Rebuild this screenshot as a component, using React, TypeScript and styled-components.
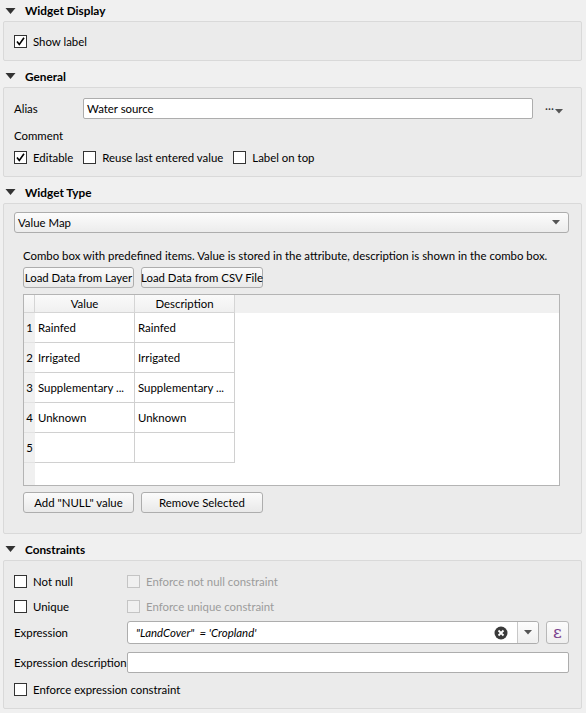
import React from 'react';
import styled, { createGlobalStyle } from 'styled-components';

const GlobalStyle = createGlobalStyle`
  html, body {
    margin: 0;
    padding: 0;
    background: #f0f0f0;
  }
  body {
    font-family: Lato, "Noto Sans", sans-serif;
    font-size: 11.4px;
    color: #000;
  }
`;

const Page = styled.div`
  width: 586px;
  height: 713px;
  overflow: hidden;
  padding: 0 4px 0 3px;
  box-sizing: border-box;
`;

const Section = styled.section<{ $first?: boolean }>`
  margin-top: ${(p) => (p.$first ? '0' : '4px')};
`;

const SectionHeader = styled.div<{ $first?: boolean }>`
  height: ${(p) => (p.$first ? '21px' : '22px')};
  display: flex;
  align-items: center;
  gap: 9px;
  padding-left: 2px;
  font-weight: bold;
  font-size: 11.8px;
`;

const Box = styled.div<{ $h: number }>`
  height: ${(p) => p.$h}px;
  box-sizing: border-box;
  background: #ebebeb;
  border: 1px solid #d9d9d9;
  border-radius: 2px;
  padding: 0 12px 0 10px;
  display: flex;
  flex-direction: column;
`;

const Row = styled.div<{ $h?: number; $mt?: number; $gap?: number }>`
  display: flex;
  align-items: center;
  height: ${(p) => p.$h ?? 16}px;
  margin-top: ${(p) => p.$mt ?? 0}px;
  gap: ${(p) => p.$gap ?? 0}px;
  white-space: nowrap;
`;

const CheckWrap = styled.label<{ $disabled?: boolean; $w?: number }>`
  display: flex;
  align-items: center;
  gap: 6px;
  color: ${(p) => (p.$disabled ? '#9c9c9c' : '#000')};
  width: ${(p) => (p.$w ? `${p.$w}px` : 'auto')};
  white-space: nowrap;
`;

const CheckBoxSquare = styled.span<{ $disabled?: boolean }>`
  width: 13px;
  height: 13px;
  box-sizing: border-box;
  border: 1px solid ${(p) => (p.$disabled ? '#c4c4c4' : '#333')};
  background: ${(p) => (p.$disabled ? '#f0f0f0' : '#fff')};
  display: flex;
  align-items: center;
  justify-content: center;
  flex: none;
`;

const Triangle = () => (
  <svg width="11" height="8" viewBox="0 0 11 8">
    <path d="M0.5 1 L10.5 1 L5.5 7 Z" fill="#333" />
  </svg>
);

const Check = ({
  label,
  checked,
  disabled,
  width,
}: {
  label: string;
  checked?: boolean;
  disabled?: boolean;
  width?: number;
}) => (
  <CheckWrap $disabled={disabled} $w={width}>
    <CheckBoxSquare $disabled={disabled}>
      {checked && (
        <svg width="11" height="11" viewBox="0 0 11 11">
          <path d="M2 5.5 L4.3 8.5 L9 1.8" stroke="#000" strokeWidth="1.6" fill="none" />
        </svg>
      )}
    </CheckBoxSquare>
    {label}
  </CheckWrap>
);

const FieldLabel = styled.span<{ $w: number }>`
  width: ${(p) => p.$w}px;
  flex: none;
  white-space: nowrap;
`;

const TextInput = styled.div`
  flex: 1;
  height: 21px;
  box-sizing: border-box;
  background: #fff;
  border: 1px solid #adadad;
  border-radius: 2px;
  display: flex;
  align-items: center;
  padding-left: 3px;
`;

const ToolButton = styled.div`
  width: 36px;
  flex: none;
  display: flex;
  align-items: center;
  justify-content: flex-end;
  padding-right: 6px;
  box-sizing: border-box;
  height: 21px;
`;

const Combo = styled.div`
  height: 21px;
  box-sizing: border-box;
  border: 1px solid #adadad;
  border-radius: 3px;
  background: linear-gradient(#fcfcfc, #ececec);
  display: flex;
  align-items: center;
  justify-content: space-between;
  padding: 0 8px 0 3px;
  margin-top: 8px;
`;

const SmallArrow = () => (
  <svg width="8" height="5" viewBox="0 0 8 5">
    <path d="M0 0 L8 0 L4 4.5 Z" fill="#555" />
  </svg>
);

const Inner = styled.div`
  padding: 0 9px;
  display: flex;
  flex-direction: column;
`;

const Button = styled.div<{ $w: number }>`
  width: ${(p) => p.$w}px;
  height: 21px;
  box-sizing: border-box;
  border: 1px solid #adadad;
  border-radius: 3px;
  background: linear-gradient(#fbfbfb, #e9e9e9);
  display: flex;
  align-items: center;
  justify-content: center;
  white-space: nowrap;
`;

const TableFrame = styled.div`
  height: 192px;
  box-sizing: border-box;
  border: 1px solid #b4b4b4;
  background: #fff;
  display: flex;
  flex-direction: column;
  margin-top: 6px;
`;

const HeaderRow = styled.div`
  display: flex;
  height: 18px;
  background: #f0f0f0;
  flex: none;
`;

const HeadCell = styled.div<{ $w: number }>`
  width: ${(p) => p.$w}px;
  box-sizing: border-box;
  background: linear-gradient(#fafafa, #f0f0f0);
  border-right: 1px solid #d5d5d5;
  border-bottom: 1px solid #d5d5d5;
  display: flex;
  align-items: center;
  justify-content: center;
`;

const TableBody = styled.div`
  flex: 1;
  display: flex;
`;

const RowNumbers = styled.div`
  width: 11px;
  background: #f0f0f0;
  display: flex;
  flex-direction: column;
`;

const RowNum = styled.div`
  height: 30px;
  box-sizing: border-box;
  border-bottom: 1px solid #e2e2e2;
  display: flex;
  align-items: center;
  justify-content: center;
`;

const Grid = styled.div`
  display: grid;
  grid-template-columns: 100px 100px;
  grid-auto-rows: 30px;
  align-self: flex-start;
`;

const Cell = styled.div`
  box-sizing: border-box;
  border-right: 1px solid #d0d0d0;
  border-bottom: 1px solid #d0d0d0;
  padding-left: 3px;
  display: flex;
  align-items: center;
  white-space: nowrap;
  overflow: hidden;
`;

const ExprInput = styled.div`
  flex: 1;
  height: 23px;
  box-sizing: border-box;
  background: #fff;
  border: 1px solid #adadad;
  border-radius: 3px;
  display: flex;
  align-items: center;
`;

const ExprText = styled.span`
  flex: 1;
  padding-left: 8px;
  font-style: italic;
  white-space: pre;
`;

const ExprDrop = styled.div`
  width: 20px;
  height: 100%;
  border-left: 1px solid #c8c8c8;
  display: flex;
  align-items: center;
  justify-content: center;
  background: linear-gradient(#fdfdfd, #efefef);
  border-radius: 0 3px 3px 0;
`;

const EpsilonButton = styled.div`
  width: 23px;
  height: 23px;
  margin-left: 7px;
  box-sizing: border-box;
  border: 1px solid #b8b8b8;
  border-radius: 3px;
  background: linear-gradient(#fcfcfc, #efefef);
  display: flex;
  align-items: center;
  justify-content: center;
  color: #7a3f8c;
  font-family: "DejaVu Serif", serif;
  font-size: 17px;
  line-height: 1;
`;

const ClearIcon = () => (
  <svg width="14" height="14" viewBox="0 0 14 14" style={{ marginRight: 9 }}>
    <circle cx="7" cy="7" r="6.5" fill="#3a3a3a" />
    <path d="M4.5 4.5 L9.5 9.5 M9.5 4.5 L4.5 9.5" stroke="#fff" strokeWidth="1.8" />
  </svg>
);

const Dots = styled.span`
  display: flex;
  align-items: flex-end;
  gap: 1px;
  color: #333;
  line-height: 1;
`;

const rows = [
  ['Rainfed', 'Rainfed'],
  ['Irrigated', 'Irrigated'],
  ['Supplementary ...', 'Supplementary ...'],
  ['Unknown', 'Unknown'],
  ['', ''],
];

export default function App() {
  return (
    <Page>
      <GlobalStyle />
      <Section $first>
        <SectionHeader $first>
          <Triangle />
          Widget Display
        </SectionHeader>
        <Box $h={40}>
          <Row $h={16} $mt={11}>
            <Check label="Show label" checked />
          </Row>
        </Box>
      </Section>

      <Section>
        <SectionHeader>
          <Triangle />
          General
        </SectionHeader>
        <Box $h={90}>
          <Row $h={21} $mt={10}>
            <FieldLabel $w={69}>Alias</FieldLabel>
            <TextInput>Water source</TextInput>
            <ToolButton>
              <Dots>
                <span>···</span>
                <SmallArrow />
              </Dots>
            </ToolButton>
          </Row>
          <Row $mt={8}>Comment</Row>
          <Row $mt={6} $gap={10}>
            <Check label="Editable" checked />
            <Check label="Reuse last entered value" />
            <Check label="Label on top" />
          </Row>
        </Box>
      </Section>

      <Section>
        <SectionHeader>
          <Triangle />
          Widget Type
        </SectionHeader>
        <Box $h={331}>
          <Combo>
            <span>Value Map</span>
            <SmallArrow />
          </Combo>
          <Inner>
            <Row $mt={14}>
              Combo box with predefined items. Value is stored in the attribute, description is
              shown in the combo box.
            </Row>
            <Row $h={21} $mt={4} $gap={7}>
              <Button $w={111}>Load Data from Layer</Button>
              <Button $w={122}>Load Data from CSV File</Button>
            </Row>
            <TableFrame>
              <HeaderRow>
                <HeadCell $w={11} />
                <HeadCell $w={100}>Value</HeadCell>
                <HeadCell $w={100}>Description</HeadCell>
              </HeaderRow>
              <TableBody>
                <RowNumbers>
                  {rows.map((_, i) => (
                    <RowNum key={i}>{i + 1}</RowNum>
                  ))}
                </RowNumbers>
                <Grid>
                  {rows.map(([v, d], i) => (
                    <React.Fragment key={i}>
                      <Cell>{v}</Cell>
                      <Cell>{d}</Cell>
                    </React.Fragment>
                  ))}
                </Grid>
              </TableBody>
            </TableFrame>
            <Row $h={21} $mt={6} $gap={7}>
              <Button $w={111}>Add "NULL" value</Button>
              <Button $w={122}>Remove Selected</Button>
            </Row>
          </Inner>
        </Box>
      </Section>

      <Section>
        <SectionHeader>
          <Triangle />
          Constraints
        </SectionHeader>
        <Box $h={149}>
          <Row $mt={12}>
            <Check label="Not null" width={113} />
            <Check label="Enforce not null constraint" disabled />
          </Row>
          <Row $mt={9}>
            <Check label="Unique" width={113} />
            <Check label="Enforce unique constraint" disabled />
          </Row>
          <Row $h={23} $mt={7}>
            <FieldLabel $w={113}>Expression</FieldLabel>
            <ExprInput>
              <ExprText>{`"LandCover"  = 'Cropland'`}</ExprText>
              <ClearIcon />
              <ExprDrop>
                <SmallArrow />
              </ExprDrop>
            </ExprInput>
            <EpsilonButton>ε</EpsilonButton>
          </Row>
          <Row $h={21} $mt={8}>
            <FieldLabel $w={113}>Expression description</FieldLabel>
            <TextInput />
          </Row>
          <Row $mt={8}>
            <Check label="Enforce expression constraint" />
          </Row>
        </Box>
      </Section>
    </Page>
  );
}
